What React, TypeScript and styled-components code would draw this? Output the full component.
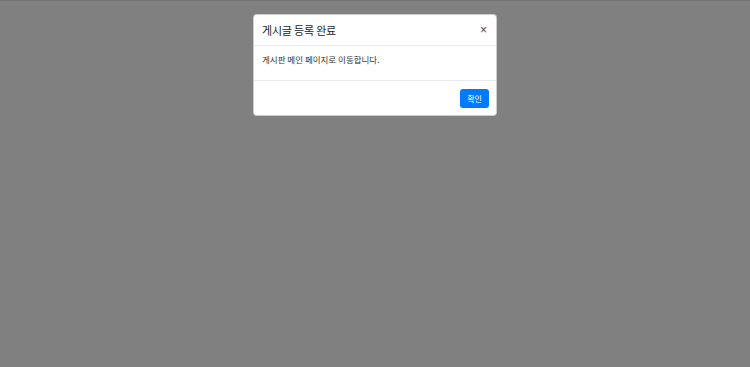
import React from 'react';
import styled, {createGlobalStyle} from 'styled-components';

const GlobalStyle = createGlobalStyle`
  html, body {
    margin: 0;
    padding: 0;
  }
  body {
    font-family: "Noto Sans CJK KR", "Noto Sans", sans-serif;
    color: #212529;
  }
`;

const Backdrop = styled.div`
  width: 750px;
  height: 367px;
  background: #808080;
  border-top: 1px solid #727272;
  box-sizing: border-box;
  display: flex;
  justify-content: center;
  align-items: flex-start;
  padding-top: 13px;
`;

const Dialog = styled.div`
  width: 244px;
  background: white;
  border: 1px solid rgba(0, 0, 0, 0.2);
  border-radius: 4px;
  box-sizing: border-box;
  display: flex;
  flex-direction: column;
`;

const Header = styled.div`
  height: 31px;
  display: flex;
  align-items: center;
  justify-content: space-between;
  padding: 0 8px 0 8px;
  border-bottom: 1px solid #e9ecef;
  box-sizing: border-box;
`;

const Title = styled.h5`
  margin: 0;
  font-size: 11px;
  font-weight: 400;
  letter-spacing: -0.2px;
  color: #212529;
`;

const Close = styled.button`
  border: none;
  background: none;
  padding: 0 1px 0 0;
  font-family: "Liberation Sans", sans-serif;
  font-size: 12px;
  line-height: 1;
  color: #444;
  cursor: pointer;
`;

const Body = styled.div`
  height: 35px;
  padding: 7px 8px 0;
  border-bottom: 1px solid #e9ecef;
  box-sizing: border-box;
  font-size: 8.5px;
  line-height: 12px;
  color: #333;
`;

const Footer = styled.div`
  height: 34px;
  display: flex;
  align-items: center;
  justify-content: flex-end;
  padding: 0 7px;
  box-sizing: border-box;
`;

const Button = styled.button`
  width: 29px;
  height: 19px;
  border: none;
  border-radius: 3px;
  background: #007bff;
  color: white;
  font-family: "Noto Sans CJK KR", sans-serif;
  font-size: 8px;
  padding: 0;
  cursor: pointer;
`;

export default function App() {
    return (
        <>
            <GlobalStyle/>
            <Backdrop>
                <Dialog>
                    <Header>
                        <Title>게시글 등록 완료</Title>
                        <Close>×</Close>
                    </Header>
                    <Body>게시판 메인 페이지로 이동합니다.</Body>
                    <Footer>
                        <Button>확인</Button>
                    </Footer>
                </Dialog>
            </Backdrop>
        </>
    );
}
